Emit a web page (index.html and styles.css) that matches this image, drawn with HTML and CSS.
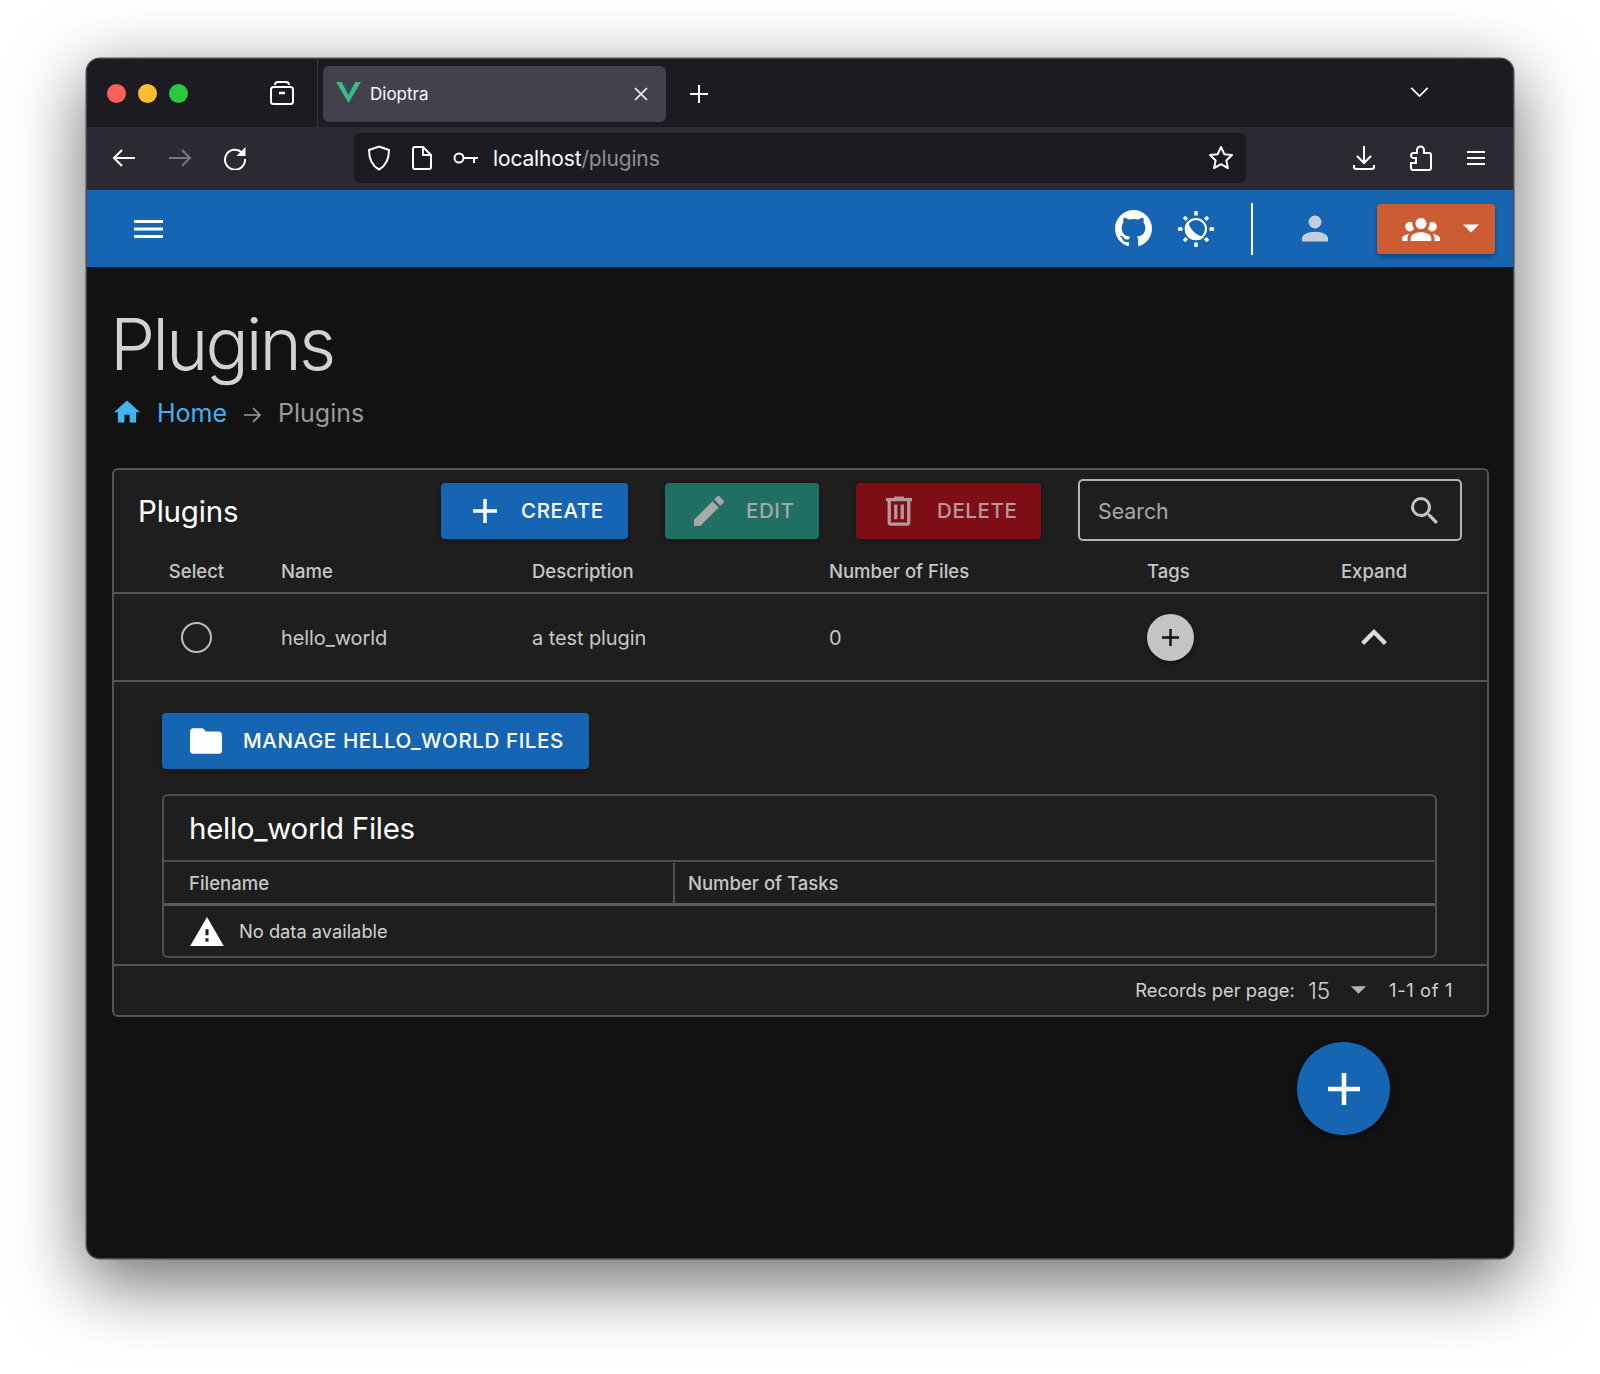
FILE: index.html
```html
<!DOCTYPE html>
<html lang="en">
<head>
  <meta charset="UTF-8" />
  <meta name="viewport" content="width=device-width, initial-scale=1.0"/>
  <title>Dioptra</title>
  <link rel="stylesheet" href="styles.css">
</head>
<body>
  <div class="window">
    <div class="tabstrip">
      <div class="lights">
        <span class="light red"></span>
        <span class="light yellow"></span>
        <span class="light green"></span>
      </div>
      <svg class="archive" viewBox="0 0 26 26" fill="none" stroke="#fff" stroke-width="2"><path d="M6 5a3 3 0 0 1 3-3h8a3 3 0 0 1 3 3"/><rect x="2" y="7" width="22" height="17" rx="2.5"/><path d="M10 13h6" stroke-width="2.500"/></svg>
      <span class="tab-sep"></span>
      <div class="tab">
        <svg class="vue" viewBox="0 0 26 22"><path fill="#3fb984" d="M0 0h6l7 13L20 0h6L13 22z"/><path fill="#34495e" d="M6 0h4l3 6 3-6h4l-7 13z"/></svg>
        <span class="tab-title">Dioptra</span>
        <svg class="tab-close" viewBox="0 0 14 14" stroke="#fff" stroke-width="1.6"><path d="M1 1l12 12M13 1L1 13"/></svg>
      </div>
      <svg class="newtab" viewBox="0 0 20 20" stroke="#fff" stroke-width="2"><path d="M10 1v18M1 10h18"/></svg>
      <svg class="tablist" viewBox="0 0 20 12" fill="none" stroke="#fff" stroke-width="1.8"><path d="M1 1l9 9 9-9"/></svg>
    </div>

    <div class="toolbar">
      <svg class="nav back" viewBox="0 0 24 20" fill="none" stroke="#fff" stroke-width="2"><path d="M23 10H2M10 2l-8 8 8 8"/></svg>
      <svg class="nav forward" viewBox="0 0 24 20" fill="none" stroke="#77767c" stroke-width="2"><path d="M1 10h21M14 2l8 8-8 8"/></svg>
      <svg class="nav reload" viewBox="0 0 24 24" fill="none" stroke="#fff" stroke-width="2"><path d="M19 6.5A10 10 0 1 0 22 13"/><path fill="#fff" stroke="none" d="M22.5 1v9h-9z"/></svg>
      <div class="urlbar">
        <svg class="shield" viewBox="0 0 24 26" fill="none" stroke="#fff" stroke-width="2"><path d="M12 1.500l10 3.500c0 9-2.500 15.500-10 19.500C4.500 20.500 2 14 2 5z"/></svg>
        <svg class="page" viewBox="0 0 20 24" fill="none" stroke="#fff" stroke-width="2"><path d="M3 1h8l8 8v12a2 2 0 0 1-2 2H3a2 2 0 0 1-2-2V3a2 2 0 0 1 2-2z"/><path d="M11 1v8h8"/></svg>
        <svg class="key" viewBox="0 0 26 14" fill="none" stroke="#fff" stroke-width="2"><circle cx="6" cy="7" r="4.500"/><path d="M11 7h14M21 7v5"/></svg>
        <span class="url">localhost<span class="url-path">/plugins</span></span>
        <svg class="star" viewBox="0 0 26 26" fill="none" stroke="#fff" stroke-width="2" stroke-linejoin="round"><path d="M13 2l3.300 7.200 7.700.9-5.700 5.300 1.600 7.700L13 19.200l-6.900 3.900 1.600-7.700L2 10.100l7.700-.9z"/></svg>
      </div>
      <svg class="tool download" viewBox="0 0 24 26" fill="none" stroke="#fff" stroke-width="2"><path d="M12 1v17M5 11l7 7 7-7M2 20v2a2 2 0 0 0 2 2h16a2 2 0 0 0 2-2v-2"/></svg>
      <svg class="tool puzzle" viewBox="0 0 22 26" fill="none" stroke="#fff" stroke-width="2"><path d="M7 8V5a3.500 3.500 0 0 1 7 0V8h5a2 2 0 0 1 2 2V23a2 2 0 0 1-2 2H3a2 2 0 0 1-2-2V18H6V13H3.500a2.500 2.500 0 0 1 0-5Z"/></svg>
      <svg class="tool burger" viewBox="0 0 20 16" stroke="#fff" stroke-width="2"><path d="M1 2h18M1 8h18M1 14h18"/></svg>
    </div>

    <header class="appbar">
      <svg class="app-menu" viewBox="3 6 18 12" preserveAspectRatio="none"><path d="M3 6H21V8H3zM3 11H21V13H3zM3 16H21V18H3z"/></svg>
      <svg class="app-github" viewBox="2 2 20 20"><path d="M12,2A10,10 0 0,0 2,12C2,16.420 4.870,20.170 8.840,21.500C9.340,21.580 9.500,21.270 9.500,21C9.500,20.770 9.500,20.140 9.500,19.310C6.730,19.910 6.140,17.970 6.140,17.970C5.680,16.810 5.030,16.500 5.030,16.500C4.120,15.880 5.100,15.900 5.100,15.900C6.100,15.970 6.630,16.930 6.630,16.930C7.500,18.450 8.970,18 9.540,17.760C9.630,17.110 9.890,16.670 10.170,16.420C7.950,16.170 5.620,15.310 5.620,11.500C5.620,10.390 6,9.500 6.650,8.790C6.550,8.540 6.200,7.500 6.750,6.150C6.750,6.150 7.590,5.880 9.500,7.170C10.290,6.950 11.150,6.840 12,6.840C12.850,6.840 13.710,6.950 14.500,7.170C16.410,5.880 17.250,6.150 17.250,6.150C17.800,7.500 17.450,8.540 17.350,8.790C18,9.500 18.380,10.390 18.380,11.500C18.380,15.320 16.040,16.160 13.810,16.410C14.170,16.720 14.500,17.330 14.500,18.260C14.500,19.600 14.500,20.680 14.500,21C14.500,21.270 14.660,21.590 15.170,21.500C19.140,20.160 22,16.420 22,12A10,10 0 0,0 12,2Z"/></svg>
      <svg class="app-theme" viewBox="0 0 38 38" fill="none" stroke="#fff" stroke-width="3.500"><path d="M19 1v4.500M19 32.500V37M1 19h4.500M32.500 19H37M7 7l2.800 2.800M28.200 28.200L31 31M31 7l-2.800 2.800M9.800 28.200L7 31"/><circle cx="19" cy="19" r="10" stroke-width="2"/><path fill="#fff" stroke="none" d="M11 11A11.300 11.300 0 0 0 27 27 20 20 0 0 1 11 11z"/></svg>
      <span class="app-divider"></span>
      <svg class="app-account" viewBox="4 4 16 16"><path d="M12,4A4,4 0 0,1 16,8A4,4 0 0,1 12,12A4,4 0 0,1 8,8A4,4 0 0,1 12,4M12,14C16.420,14 20,15.790 20,18V20H4V18C4,15.790 7.580,14 12,14Z"/></svg>
      <div class="group-btn">
        <svg class="group-icon" viewBox="0 5 24 15"><path d="M12,5.500A3.500,3.500 0 0,1 15.500,9A3.500,3.500 0 0,1 12,12.500A3.500,3.500 0 0,1 8.500,9A3.500,3.500 0 0,1 12,5.500M5,8C5.560,8 6.080,8.150 6.530,8.420C6.380,9.850 6.800,11.270 7.660,12.380C7.160,13.340 6.160,14 5,14A3,3 0 0,1 2,11A3,3 0 0,1 5,8M19,8A3,3 0 0,1 22,11A3,3 0 0,1 19,14C17.840,14 16.840,13.340 16.340,12.380C17.200,11.270 17.620,9.850 17.470,8.420C17.920,8.150 18.440,8 19,8M5.500,18.250C5.500,16.180 8.410,14.500 12,14.500C15.590,14.500 18.500,16.180 18.500,18.250V20H5.500V18.250M0,20V18.500C0,17.110 1.890,15.940 4.450,15.600C3.860,16.280 3.500,17.220 3.500,18.250V20H0M24,20H20.500V18.250C20.500,17.220 20.140,16.280 19.550,15.600C22.110,15.940 24,17.110 24,18.500V20Z"/></svg>
        <svg class="group-caret" viewBox="7 10 10 5"><path d="M7,10L12,15L17,10H7Z"/></svg>
      </div>
    </header>

    <main class="content">
      <h1 class="page-title">Plugins</h1>
      <nav class="breadcrumbs">
        <svg class="crumb-home" viewBox="2 3 20 17"><path d="M10,20V14H14V20H19V12H22L12,3L2,12H5V20H10Z"/></svg>
        <a class="crumb-link">Home</a>
        <svg class="crumb-arrow" viewBox="0 0 18 16" fill="none" stroke="#9a9a9a" stroke-width="1.600"><path d="M0 8h16M9 1l7 7-7 7"/></svg>
        <span class="crumb-current">Plugins</span>
      </nav>

      <section class="card">
        <div class="card-top">
          <h2 class="card-title">Plugins</h2>
          <button class="btn btn-create">
            <svg viewBox="5 5 14 14"><path d="M19,13H13V19H11V13H5V11H11V5H13V11H19V13Z"/></svg>
            Create
          </button>
          <button class="btn btn-edit">
            <svg viewBox="3 3 18 18"><path d="M20.710,7.040C21.100,6.650 21.100,6 20.710,5.630L18.370,3.290C18,2.900 17.350,2.900 16.960,3.290L15.120,5.120L18.870,8.870M3,17.250V21H6.750L17.810,9.930L14.060,6.180L3,17.250Z"/></svg>
            Edit
          </button>
          <button class="btn btn-delete">
            <svg viewBox="4 3 16 18"><path d="M9,3V4H4V6H5V19A2,2 0 0,0 7,21H17A2,2 0 0,0 19,19V6H20V4H15V3H9M7,6H17V19H7V6M9,8V17H11V8H9M13,8V17H15V8H13Z"/></svg>
            Delete
          </button>
          <div class="search">
            <span class="search-label">Search</span>
            <svg viewBox="3 3 17.500 17.500"><path d="M9.500,3A6.500,6.500 0 0,1 16,9.500C16,11.110 15.410,12.590 14.440,13.730L14.710,14H15.500L20.500,19L19,20.500L14,15.500V14.710L13.730,14.440C12.590,15.410 11.110,16 9.500,16A6.500,6.500 0 0,1 3,9.500A6.500,6.500 0 0,1 9.500,3M9.500,5C7,5 5,7 5,9.500C5,12 7,14 9.500,14C12,14 14,12 14,9.500C14,7 12,5 9.500,5Z"/></svg>
          </div>
        </div>

        <div class="grid grid-head">
          <div class="cell center">Select</div>
          <div class="cell">Name</div>
          <div class="cell">Description</div>
          <div class="cell">Number of Files</div>
          <div class="cell">Tags</div>
          <div class="cell center">Expand</div>
        </div>
        <div class="grid grid-row">
          <div class="cell center"><span class="radio"></span></div>
          <div class="cell cell-text">hello_world</div>
          <div class="cell cell-text">a test plugin</div>
          <div class="cell cell-text">0</div>
          <div class="cell">
            <span class="tag-add"><svg viewBox="5 5 14 14"><path d="M19,13H13V19H11V13H5V11H11V5H13V11H19V13Z"/></svg></span>
          </div>
          <div class="cell center">
            <svg class="chevron" viewBox="6 8 12 7.410"><path d="M7.410,15.410L12,10.830L16.590,15.410L18,14L12,8L6,14L7.410,15.410Z"/></svg>
          </div>
        </div>

        <div class="expanded">
          <button class="btn btn-manage">
            <svg viewBox="2 4 20 16"><path d="M10,4H4C2.890,4 2,4.890 2,6V18A2,2 0 0,0 4,20H20A2,2 0 0,0 22,18V8C22,6.890 21.100,6 20,6H12L10,4Z"/></svg>
            Manage hello_world files
          </button>
          <div class="files">
            <h3 class="files-title">hello_world Files</h3>
            <div class="files-head">
              <div class="files-col first">Filename</div>
              <div class="files-col">Number of Tasks</div>
            </div>
            <div class="files-empty">
              <svg viewBox="1 2 22 19"><path d="M13,14H11V10H13M13,18H11V16H13M1,21H23L12,2L1,21Z"/></svg>
              No data available
            </div>
          </div>
        </div>

        <div class="pager">
          <span>Records per page:</span>
          <span class="pager-size">15</span>
          <svg class="pager-caret" viewBox="7 10 10 5"><path d="M7,10L12,15L17,10H7Z"/></svg>
          <span class="pager-count">1-1 of 1</span>
        </div>
      </section>

      <div class="fab-row">
        <button class="fab"><svg viewBox="5 5 14 14"><path d="M19,13H13V19H11V13H5V11H11V5H13V11H19V13Z"/></svg></button>
      </div>
    </main>
  </div>
</body>
</html>
```

FILE: styles.css
```css
* { box-sizing: border-box; }

body {
  margin: 0;
  height: 1374px;
  padding: 59px 87px 0;
  background: #fff;
  font-family: Inter, "Noto Sans", sans-serif;
  overflow: hidden;
}

.window {
  width: 1426px;
  height: 1199px;
  border-radius: 13px;
  overflow: hidden;
  background: #121212;
  box-shadow: 0 0 0 1.5px #4a4a4a, 0 22px 70px 4px rgba(0, 0, 0, 0.56);
  display: flex;
  flex-direction: column;
}

/* browser chrome */
.tabstrip {
  height: 68px;
  flex: none;
  background: #1c1b22;
  display: flex;
  align-items: center;
  padding-left: 20px;
}

.lights { display: flex; gap: 12px; width: 162px; margin-top: 1px; }
.light { width: 19px; height: 19px; border-radius: 50%; }
.red { background: #ff5f57; }
.yellow { background: #febc2e; }
.green { background: #28c840; }

.archive { width: 26px; height: 26px; }
.tab-sep { width: 1px; align-self: stretch; margin-left: 22px; background: #3a3a42; }

.tab {
  width: 343px;
  height: 56px;
  margin-top: 2px;
  margin-left: 5px;
  background: #42414d;
  border-radius: 6px;
  display: flex;
  align-items: center;
  padding-left: 13px;
}

.vue { width: 25px; height: 21px; margin-top: -3px; }
.tab-title { color: #fbfbfe; font-size: 17px; margin-left: 9px; }
.tab-close { width: 14px; height: 14px; margin-left: auto; margin-right: 18px; margin-top: -1px; }
.newtab { width: 20px; height: 20px; margin-left: 23px; margin-top: 1px; }
.tablist { width: 19px; height: 11px; margin-left: 701px; margin-top: -1px; }

.toolbar {
  height: 63px;
  flex: none;
  background: #2b2a33;
  display: flex;
  align-items: center;
  padding-left: 25px;
  padding-bottom: 1px;
}

.nav { flex: none; }
.back { width: 24px; height: 20px; }
.forward { width: 24px; height: 20px; margin-left: 32px; }
.reload { width: 24px; height: 24px; margin-left: 31px; }

.urlbar {
  width: 892px;
  height: 50px;
  margin-left: 107px;
  background: #1c1b22;
  border-radius: 6px;
  display: flex;
  align-items: center;
  padding-left: 13px;
}

.shield { width: 24px; height: 26px; }
.page { width: 20px; height: 24px; margin-left: 21px; }
.key { width: 26px; height: 14px; margin-left: 21px; }
.url { color: #fbfbfe; font-size: 21px; margin-left: 14px; letter-spacing: -0.15px; }
.url-path { color: #8f8f94; }
.star { width: 26px; height: 26px; margin-left: auto; margin-right: 12px; }

.tool { flex: none; }
.download { width: 24px; height: 26px; margin-left: 106px; }
.puzzle { width: 22px; height: 26px; margin-left: 34px; }
.burger { width: 20px; height: 16px; margin-left: 34px; }

/* app bar */
.appbar {
  height: 77px;
  flex: none;
  background: #1565b3;
  display: flex;
  align-items: center;
  padding-left: 47px;
  fill: #fff;
}

.app-menu { width: 29px; height: 18px; }
.app-github { width: 37px; height: 37px; margin-left: 952px; }
.app-theme { width: 38px; height: 38px; margin-left: 25px; }
.app-divider { width: 2px; height: 52px; background: #fff; margin-left: 36px; }
.app-account { width: 26px; height: 27px; margin-left: 49px; fill: #c3cfdf; }

.group-btn {
  width: 118px;
  height: 50px;
  margin-left: 49px;
  background: #cc5c33;
  border-radius: 4px;
  box-shadow: 0 3px 5px rgba(0, 0, 0, 0.3);
  display: flex;
  align-items: center;
  padding-left: 25px;
}

.group-icon { width: 38px; height: 24px; }
.group-caret { width: 16px; height: 9px; margin-left: 23px; }

/* page content */
.content { flex: 1; padding: 0 24px 0 25px; }

.page-title {
  margin: 34px 0 0 -2px;
  color: #d2d2d2;
  font-size: 72px;
  font-weight: 300;
  line-height: 86px;
  letter-spacing: -3px;
}

.breadcrumbs {
  display: flex;
  align-items: center;
  height: 40px;
  margin-top: 6px;
  font-size: 25px;
  padding-left: 2px;
}

.crumb-home { width: 26px; height: 23px; fill: #42b3f0; margin-top: -4px; }
.crumb-link { color: #42b3f0; margin-left: 17px; }
.crumb-arrow { width: 18px; height: 16px; margin-left: 17px; margin-top: 3px; }
.crumb-current { color: #9a9a9a; margin-left: 16px; }

.card {
  margin-top: 35px;
  height: 549px;
  background: #1e1e1e;
  border: 2px solid #555;
  border-radius: 6px;
}

.card-top {
  display: flex;
  align-items: center;
  height: 78px;
  padding-left: 24px;
  padding-top: 4px;
}

.card-title {
  margin: 0;
  width: 303px;
  color: #fff;
  font-size: 29.5px;
  font-weight: 400;
  letter-spacing: -0.2px;
}

.btn {
  display: flex;
  align-items: center;
  height: 56px;
  border: none;
  border-radius: 4px;
  color: #fff;
  font-family: inherit;
  font-size: 20.5px;
  font-weight: 500;
  text-transform: uppercase;
  letter-spacing: 0.6px;
  line-height: 30px;
  padding-top: 1px;
  box-shadow: 0 2px 4px rgba(0, 0, 0, 0.35);
}

.btn svg { fill: currentColor; flex: none; margin-top: -1px; }

.btn-create { width: 187px; background: #1565b3; padding-left: 32px; }
.btn-create svg { width: 24px; height: 24px; margin-right: 24px; }

.btn-edit { width: 154px; margin-left: 37px; background: #1f6f62; color: #a5a8a6; padding-left: 29px; }
.btn-edit svg { width: 30px; height: 30px; margin-right: 22px; }

.btn-delete { width: 185px; margin-left: 37px; background: #7f0d15; color: #b49a9c; padding-left: 30px; }
.btn-delete svg { width: 26px; height: 30px; margin-right: 25px; }

.search {
  width: 384px;
  height: 62px;
  margin-top: -2px;
  margin-left: 37px;
  border: 2px solid #b5b5b5;
  border-radius: 5px;
  display: flex;
  align-items: center;
  justify-content: space-between;
  padding: 0 22px 0 18px;
  color: #a9a9a9;
  font-size: 21.3px;
}

.search-label { padding-top: 2px; }
.search svg { width: 27px; height: 27px; fill: #c4c4c4; }

.grid {
  display: grid;
  grid-template-columns: 165px 251px 297px 318px 116px 1fr;
  align-items: center;
  color: #c7c7c7;
}

.cell { padding-left: 2px; }
.cell.center { padding-left: 0; text-align: center; }
.cell-text { padding-top: 2px; letter-spacing: -0.1px; }

.grid-head {
  height: 46px;
  padding-top: 2px;
  border-bottom: 2px solid #555;
  font-size: 18.5px;
  font-weight: 500;
}

.grid-row {
  height: 88px;
  border-bottom: 2px solid #555;
  font-size: 20px;
}

.radio {
  display: inline-block;
  width: 31px;
  height: 31px;
  border: 2px solid #bdbdbd;
  border-radius: 50%;
  vertical-align: middle;
}

.tag-add {
  width: 47px;
  height: 47px;
  border-radius: 50%;
  background: #c4c4c4;
  box-shadow: 0 2px 4px rgba(0, 0, 0, 0.5);
  display: flex;
  align-items: center;
  justify-content: center;
}

.tag-add svg { width: 17px; height: 17px; fill: #111; }

.chevron { width: 26px; height: 16px; fill: #dcdcdc; vertical-align: middle; margin-bottom: 4px; }

.expanded {
  height: 284px;
  border-bottom: 2px solid #555;
  padding: 31px 50px 0 48px;
}

.btn-manage { width: 427px; background: #1565b3; padding-left: 28px; }
.btn-manage svg { width: 32px; height: 26px; margin-right: 21px; }

.files {
  margin-top: 25px;
  height: 164px;
  border: 2px solid #505050;
  border-radius: 6px;
}

.files-title {
  margin: 0;
  height: 66px;
  display: flex;
  align-items: center;
  padding-left: 25px;
  color: #fff;
  font-size: 29.5px;
  font-weight: 400;
  letter-spacing: -0.3px;
  border-bottom: 2px solid #505050;
}

.files-head {
  display: flex;
  height: 44px;
  padding-top: 1px;
  border-bottom: 3px solid #5a5a5a;
  color: #c7c7c7;
  font-size: 18.5px;
  font-weight: 500;
}

.files-col { display: flex; align-items: center; padding-left: 13px; }
.files-col.first { width: 511px; padding-left: 25px; border-right: 2px solid #505050; }

.files-empty {
  display: flex;
  align-items: center;
  height: 49px;
  padding-left: 26px;
  color: #d2d2d2;
  font-size: 18.3px;
  padding-top: 1px;
}

.files-empty svg { width: 34px; height: 29px; margin-right: 15px; fill: #fff; }

.pager {
  display: flex;
  align-items: center;
  justify-content: flex-end;
  height: 49px;
  padding-right: 34px;
  padding-bottom: 1px;
  color: #d0d0d0;
  font-size: 18.4px;
}

.pager-size { font-size: 22.5px; margin-left: 13px; font-weight: 300; }
.pager-caret { width: 15px; height: 8px; margin-left: 21px; fill: #b5b5b5; }
.pager-count { margin-left: 23px; letter-spacing: 0.6px; }

.fab-row { display: flex; justify-content: flex-end; padding-right: 99px; margin-top: 25px; }

.fab {
  width: 93px;
  height: 93px;
  border: none;
  border-radius: 50%;
  background: #1565b3;
  box-shadow: 0 3px 6px rgba(0, 0, 0, 0.4);
  display: flex;
  align-items: center;
  justify-content: center;
}

.fab svg { width: 32px; height: 32px; fill: #fff; }
```
